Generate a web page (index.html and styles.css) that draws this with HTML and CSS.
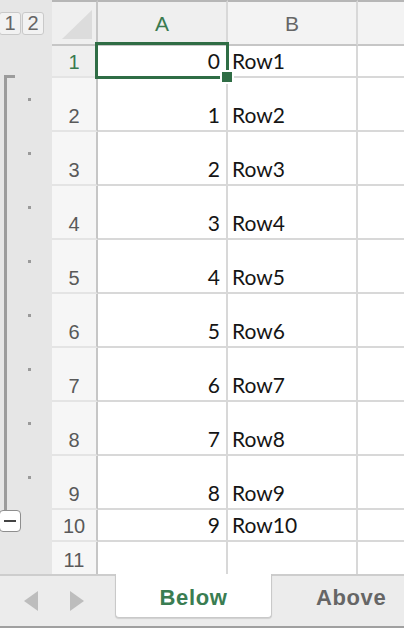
FILE: index.html
```html
<!DOCTYPE html>
<html>
<head>
<meta charset="utf-8">
<link rel="stylesheet" href="styles.css">
</head>
<body>
<div class="sheet">
  <div class="gutter">
    <div class="levels"><span class="lvl lvl1">1</span><span class="lvl">2</span></div>
    <div class="gr r32"></div>
    <div class="group">
      <div class="gr r54"><i class="dot"></i></div>
      <div class="gr r54"><i class="dot"></i></div>
      <div class="gr r54"><i class="dot"></i></div>
      <div class="gr r54"><i class="dot"></i></div>
      <div class="gr r54"><i class="dot"></i></div>
      <div class="gr r54"><i class="dot"></i></div>
      <div class="gr r54"><i class="dot"></i></div>
      <div class="gr r54"><i class="dot"></i></div>
      <div class="gr r32"><span class="minus"><i></i></span></div>
    </div>
    <div class="gr r32"></div>
  </div>
  <div class="grid">
    <div class="corner"><span class="tri"></span></div>
    <div class="ch sel">A</div>
    <div class="ch">B</div>
    <div class="ch last"></div>

    <div class="rh sel">1</div><div class="c a">0</div><div class="c b">Row1</div><div class="c e"></div>
    <div class="rh">2</div><div class="c a">1</div><div class="c b">Row2</div><div class="c e"></div>
    <div class="rh">3</div><div class="c a">2</div><div class="c b">Row3</div><div class="c e"></div>
    <div class="rh">4</div><div class="c a">3</div><div class="c b">Row4</div><div class="c e"></div>
    <div class="rh">5</div><div class="c a">4</div><div class="c b">Row5</div><div class="c e"></div>
    <div class="rh">6</div><div class="c a">5</div><div class="c b">Row6</div><div class="c e"></div>
    <div class="rh">7</div><div class="c a">6</div><div class="c b">Row7</div><div class="c e"></div>
    <div class="rh">8</div><div class="c a">7</div><div class="c b">Row8</div><div class="c e"></div>
    <div class="rh">9</div><div class="c a">8</div><div class="c b">Row9</div><div class="c e"></div>
    <div class="rh">10</div><div class="c a">9</div><div class="c b">Row10</div><div class="c e"></div>
    <div class="rh nb">11</div><div class="c a nb"></div><div class="c b nb"></div><div class="c e nb"></div>
  </div>
  <div class="selection"></div>
  <div class="handle"></div>
</div>
<div class="tabbar">
  <svg class="arrow" width="14" height="20" viewBox="0 0 14 20"><polygon points="14,0 14,20 0,10" fill="#bdbdbd"/></svg>
  <svg class="arrow arrow-r" width="14" height="20" viewBox="0 0 14 20"><polygon points="0,0 0,20 14,10" fill="#bdbdbd"/></svg>
  <div class="tab active">Below</div>
  <div class="tab other">Above</div>
</div>
</body>
</html>
```
FILE: styles.css
```css
* { box-sizing: border-box; }
html, body { margin: 0; padding: 0; }
body {
  width: 404px;
  height: 628px;
  overflow: hidden;
  background: #fff;
  font-family: "Liberation Sans", Arial, sans-serif;
}
.sheet {
  position: relative;
  display: flex;
  height: 574px;
}
.gutter {
  width: 52px;
  flex: none;
  background: #e6e6e6;
  display: flex;
  flex-direction: column;
}
.levels {
  height: 46px;
  display: flex;
  padding-top: 12px;
  margin-left: -1px;
}
.lvl {
  width: 22px;
  height: 23px;
  margin-right: 1px;
  background: #f2f2f2;
  border: 1px solid #c9c9c9;
  border-radius: 3px;
  color: #666;
  font-size: 20px;
  line-height: 21px;
  text-align: center;
}
.gr { flex: none; }
.r32 { height: 32px; }
.r54 {
  height: 54px;
  display: flex;
  align-items: center;
}
.dot {
  display: block;
  width: 3px;
  height: 3px;
  margin-left: 28px;
  margin-top: -2px;
  background: #9a9a9a;
}
.group {
  position: relative;
}
.group::before {
  content: "";
  position: absolute;
  left: 4px;
  top: 2px;
  bottom: 16px;
  width: 3px;
  background: #9c9c9c;
}
.group::after {
  content: "";
  position: absolute;
  left: 4px;
  top: 2px;
  width: 11px;
  height: 3px;
  background: #9c9c9c;
}
.minus {
  position: relative;
  z-index: 1;
  display: flex;
  align-items: center;
  justify-content: center;
  width: 22px;
  height: 22px;
  margin-top: 5px;
  margin-left: -1px;
  background: #fff;
  border: 1.5px solid #8e8e8e;
  border-radius: 4px;
}
.minus i {
  display: block;
  width: 12px;
  height: 2px;
  background: #444;
}
.grid {
  flex: 1;
  display: grid;
  grid-template-columns: 46px 130px 130px 1fr;
  grid-template-rows: 46px 32px repeat(8, 54px) 32px 32px;
}
.corner {
  background: #efefef;
  border-top: 2px solid #b6b6b6;
  border-bottom: 2px solid #c6c6c6;
  border-right: 2px solid #c6c6c6;
  padding: 8px 0 0 10px;
}
.tri {
  display: block;
  width: 30px;
  height: 29px;
  background: #dcdcdc;
  clip-path: polygon(100% 0, 100% 100%, 0 100%);
}
.ch {
  background: #f3f3f3;
  border-top: 2px solid #b6b6b6;
  border-bottom: 2px solid #c6c6c6;
  border-right: 2px solid #d8d8d8;
  display: flex;
  align-items: center;
  justify-content: center;
  color: #666;
  font-size: 21px;
  padding-top: 1px;
}
.ch.sel { color: #3a7a4f; background: #efefef; }
.ch.last { border-right: none; }
.rh {
  background: #f6f6f6;
  border-right: 2px solid #c6c6c6;
  border-bottom: 2px solid #e4e4e4;
  display: flex;
  align-items: flex-end;
  justify-content: center;
  color: #595959;
  font-size: 20px;
  line-height: 20px;
  padding-bottom: 4px;
}
.rh.sel { color: #3a7a4f; background: #efefef; }
.c {
  border-right: 2px solid #d8d8d8;
  border-bottom: 2px solid #d8d8d8;
  display: flex;
  align-items: flex-end;
  font-family: Lato, "Liberation Sans", sans-serif;
  font-size: 21px;
  line-height: 20px;
  color: #151515;
  padding-bottom: 5px;
}
.c.a { justify-content: flex-end; padding-right: 6px; }
.c.b { padding-left: 4px; }
.c.e { border-right: none; }
.nb { border-bottom: none; }
.selection {
  position: absolute;
  left: 95px;
  top: 42px;
  width: 134px;
  height: 37px;
  border: 3px solid #2f6d45;
}
.handle {
  position: absolute;
  left: 220px;
  top: 70px;
  width: 14px;
  height: 14px;
  background: #2f6d45;
  border: 2px solid #fff;
}
.tabbar {
  height: 54px;
  background: #ececec;
  border-top: 2px solid #cdcdcd;
  border-bottom: 2px solid #a0a0a0;
  display: flex;
  align-items: flex-start;
}
.arrow {
  flex: none;
  margin-top: 15px;
  margin-left: 24px;
}
.arrow-r { margin-left: 32px; }
.tab {
  flex: none;
  height: 44px;
  margin-top: -2px;
  padding-top: 4px;
  font-size: 22px;
  font-weight: bold;
  line-height: 40px;
  letter-spacing: 0.6px;
  text-align: center;
}
.tab.active {
  width: 157px;
  margin-left: 31px;
  background: #fff;
  color: #3a7d52;
  border: 1px solid #c9c9c9;
  border-top: none;
  border-radius: 0 0 4px 4px;
  box-shadow: 0 1px 1px rgba(0, 0, 0, 0.12);
}
.tab.other {
  margin-left: 44px;
  color: #666;
}
```
